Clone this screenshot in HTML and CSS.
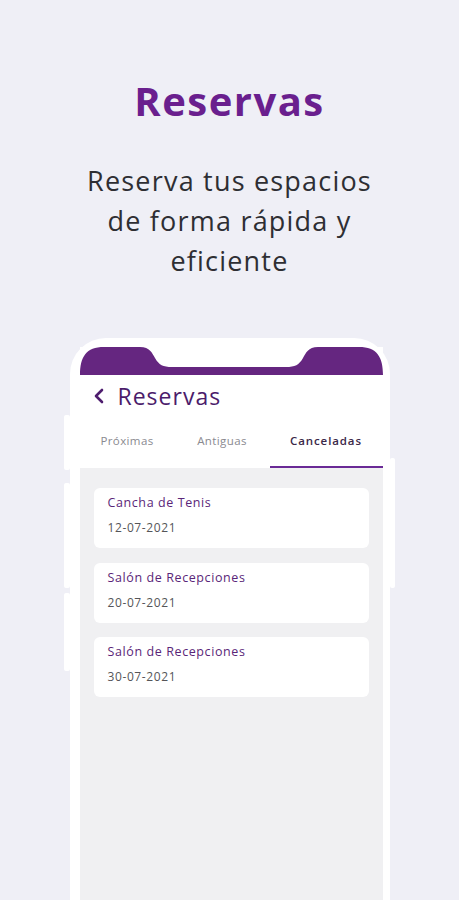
FILE: index.html
```html
<!DOCTYPE html>
<html lang="es">
<head>
<meta charset="utf-8">
<title>Reservas</title>
<link rel="stylesheet" href="styles.css">
</head>
<body>
<main class="page">
  <section class="hero">
    <h1 class="hero-title">Reservas</h1>
    <p class="hero-text">Reserva tus espacios<br>de forma rápida y<br>eficiente</p>
  </section>
  <div class="phone">
    <span class="btn btn-l1"></span>
    <span class="btn btn-l2"></span>
    <span class="btn btn-l3"></span>
    <span class="btn btn-r1"></span>
    <div class="screen">
      <svg class="notchbar" width="303" height="28" viewBox="0 0 303 28">
        <path d="M0,28 C0,10 6,0 24,0 L60,0 C70,0 72,6 75,11 C79,18 83,20 92,20 L206,20 C215,20 219,18 223,11 C226,6 228,0 238,0 L279,0 C297,0 303,10 303,28 Z" fill="#652680"/>
      </svg>
      <header class="appbar">
        <svg class="back" width="12" height="16" viewBox="0 0 12 16">
          <path d="M9,2 L3,8 L9,14" fill="none" stroke="#4e1d6e" stroke-width="2.6" stroke-linecap="round" stroke-linejoin="round"/>
        </svg>
        <span class="appbar-title">Reservas</span>
      </header>
      <nav class="tabs">
        <span class="tab">Próximas</span>
        <span class="tab">Antiguas</span>
        <span class="tab tab-active">Canceladas</span>
      </nav>
      <div class="content">
        <div class="card">
          <span class="card-title">Cancha de Tenis</span>
          <span class="card-date">12-07-2021</span>
        </div>
        <div class="card">
          <span class="card-title">Salón de Recepciones</span>
          <span class="card-date">20-07-2021</span>
        </div>
        <div class="card">
          <span class="card-title">Salón de Recepciones</span>
          <span class="card-date">30-07-2021</span>
        </div>
      </div>
    </div>
  </div>
</main>
</body>
</html>
```
FILE: styles.css
```css
* { box-sizing: border-box; }
html, body { margin: 0; padding: 0; }
body {
  background: #efeff6;
  font-family: "Open Sans", "Liberation Sans", sans-serif;
  width: 459px;
  height: 900px;
  overflow: hidden;
}
.page {
  display: flex;
  flex-direction: column;
  align-items: center;
}
.hero {
  display: flex;
  flex-direction: column;
  align-items: center;
  padding-top: 74px;
}
.hero-title {
  margin: 0;
  font-family: "Open Sans", sans-serif;
  font-weight: 700;
  font-size: 40px;
  line-height: 54px;
  color: #6a1f8e;
  letter-spacing: 1.5px;
}
.hero-text {
  margin: 33px 0 0;
  text-align: center;
  font-weight: 400;
  font-size: 27px;
  line-height: 40px;
  color: #2e2e33;
  letter-spacing: 1.2px;
}
.phone {
  position: relative;
  margin-top: 57px;
  width: 320px;
  height: 600px;
  background: #ffffff;
  border-radius: 36px 36px 0 0;
  padding: 9px 7px 0 10px;
}
.btn {
  position: absolute;
  background: #ffffff;
  width: 6px;
  border-radius: 2px;
}
.btn-l1 { left: -6px; top: 77px; height: 55px; }
.btn-l2 { left: -6px; top: 145px; height: 105px; }
.btn-l3 { left: -6px; top: 255px; height: 78px; }
.btn-r1 { right: -5px; top: 120px; height: 130px; width: 5px; }
.screen {
  display: flex;
  flex-direction: column;
  height: 100%;
  background: #ffffff;
}
.notchbar { display: block; }
.appbar {
  display: flex;
  align-items: center;
  height: 43px;
  padding: 0 0 2px 13px;
}
.back { display: block; }
.appbar-title {
  margin-left: 13px;
  font-size: 23px;
  font-weight: 500;
  color: #4b1c6b;
  letter-spacing: 1px;
}
.tabs {
  display: grid;
  grid-template-columns: 95px 95px 1fr;
  height: 50px;
}
.tab {
  display: flex;
  align-items: center;
  justify-content: center;
  padding-bottom: 6px;
  font-size: 11.5px;
  color: #8a8a90;
  letter-spacing: 0.4px;
}
.tab-active {
  color: #3b2848;
  font-weight: 600;
  border-bottom: 2px solid #6a2a96;
  padding-bottom: 4px;
  letter-spacing: 0.9px;
}
.content {
  flex: 1;
  background: #f0f0f2;
  padding: 20px 14px;
  display: flex;
  flex-direction: column;
  gap: 14.5px;
}
.card {
  height: 60px;
  background: #ffffff;
  border-radius: 6px;
  padding: 7px 14px;
  display: flex;
  flex-direction: column;
  gap: 9px;
}
.card-title {
  font-size: 12.5px;
  line-height: 16px;
  font-weight: 500;
  color: #5a2678;
  letter-spacing: 0.6px;
}
.card-date {
  font-size: 12px;
  line-height: 16px;
  color: #555559;
  letter-spacing: 0.6px;
}
```
